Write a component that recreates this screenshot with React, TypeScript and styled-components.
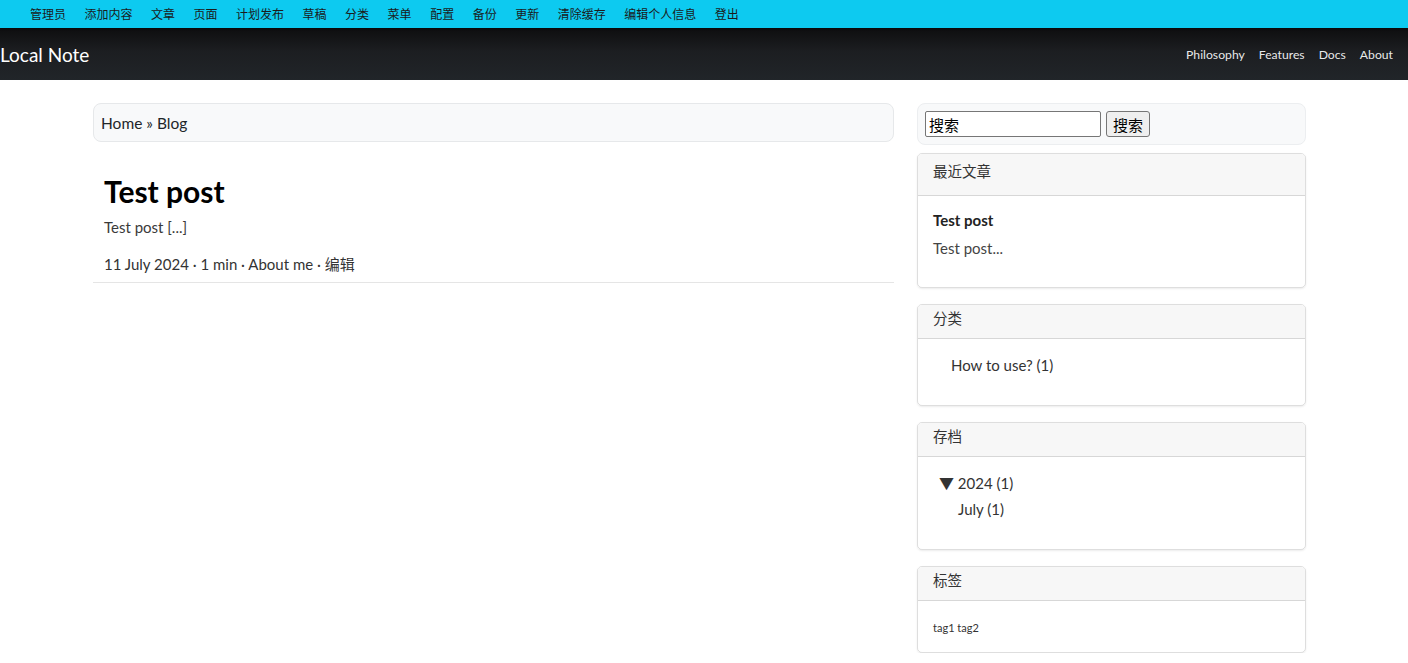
import React from 'react';
import styled, { createGlobalStyle } from 'styled-components';

const GlobalStyle = createGlobalStyle`
  html, body {
    margin: 0;
    padding: 0;
    background: #ffffff;
    font-family: Lato, 'Noto Sans CJK SC', sans-serif;
    color: #212529;
  }
  * {
    box-sizing: border-box;
  }
`;

const AdminBar = styled.div`
  height: 28px;
  background: #0dcaf0;
  display: flex;
  align-items: center;
  padding-left: 21px;
  box-shadow: 0 1px 2px rgba(0, 0, 0, 0.45);
  position: relative;
  z-index: 1;
`;

const AdminLink = styled.a`
  font-size: 12px;
  line-height: 16px;
  color: #1b1b1b;
  padding: 0 9px;
  margin-right: 0.5px;
  text-decoration: none;
  font-family: 'Noto Sans CJK SC', sans-serif;
`;

const Navbar = styled.nav`
  height: 52px;
  background: linear-gradient(180deg, #0e0e0f 0%, #1c1e21 45%, #212529 100%);
  display: flex;
  align-items: center;
  justify-content: space-between;
  padding-right: 15px;
`;

const Brand = styled.a`
  font-size: 19px;
  color: #ffffff;
  text-decoration: none;
`;

const NavLinks = styled.div`
  display: flex;
  gap: 14px;
`;

const NavLink = styled.a`
  font-size: 12.2px;
  color: rgba(255, 255, 255, 0.92);
  text-decoration: none;
`;

const Main = styled.main`
  display: flex;
  align-items: flex-start;
  gap: 23px;
  padding: 23px 0 0 93px;
`;

const Content = styled.div`
  width: 801px;
`;

const Breadcrumb = styled.div`
  height: 39px;
  display: flex;
  align-items: center;
  padding: 0 7px;
  background: #f8f9fa;
  border: 1px solid #e6e8ea;
  border-radius: 8px;
  font-size: 15.5px;
`;

const Post = styled.article`
  padding: 0 11px 7px;
  border-bottom: 1px solid #e5e5e5;
`;

const PostTitle = styled.h2`
  margin: 31px 0 0;
  font-size: 30px;
  line-height: 36px;
  font-weight: 700;
  color: #000;
`;

const Excerpt = styled.p`
  margin: 7px 0 0;
  font-size: 15px;
  line-height: 22px;
  color: #3a3a3a;
`;

const Meta = styled.div`
  margin-top: 15px;
  font-size: 15px;
  line-height: 22px;
  color: #333;
`;

const Sidebar = styled.aside`
  width: 389px;
  display: flex;
  flex-direction: column;
  gap: 8px;
`;

const SearchBox = styled.form`
  height: 42px;
  display: flex;
  align-items: center;
  gap: 5px;
  padding: 0 7px;
  background: #f8f9fa;
  border: 1px solid #eceef0;
  border-radius: 8px;
`;

const SearchInput = styled.input`
  width: 176px;
  height: 26px;
  border: 1px solid #767676;
  border-radius: 2px;
  padding: 0 3px;
  font-size: 15px;
  font-family: 'Noto Sans CJK SC', sans-serif;
  color: #000;
  background: #fff;
`;

const SearchButton = styled.button`
  width: 44px;
  height: 26px;
  border: 1px solid #767676;
  border-radius: 3px;
  background: #efefef;
  font-size: 15px;
  font-family: 'Noto Sans CJK SC', sans-serif;
  color: #000;
  padding: 0;
`;

const Widgets = styled.div`
  display: flex;
  flex-direction: column;
  gap: 16px;
`;

const Card = styled.section`
  border: 1px solid rgba(0, 0, 0, 0.13);
  border-radius: 5px;
  box-shadow: 0 1px 2px rgba(0, 0, 0, 0.08);
  overflow: hidden;
`;

const CardHeader = styled.div<{ $tall?: boolean }>`
  height: ${(p) => (p.$tall ? '42px' : '34px')};
  padding: ${(p) => (p.$tall ? '6px' : '2px')} 15px 0;
  background: #f7f7f7;
  border-bottom: 1px solid rgba(0, 0, 0, 0.13);
  font-size: 14.5px;
  line-height: 22px;
  color: #333;
  font-family: 'Noto Sans CJK SC', sans-serif;
`;

const CardBody = styled.div<{ $top: number; $bottom: number }>`
  padding: ${(p) => p.$top}px 15px ${(p) => p.$bottom}px;
  font-size: 15px;
  line-height: 22px;
  color: #333;
`;

const RecentTitle = styled.div`
  font-weight: 700;
  color: #222;
`;

const RecentText = styled.div`
  margin-top: 6px;
  color: #444;
`;

const ListItem = styled.div<{ $indent: number }>`
  padding-left: ${(p) => p.$indent}px;
  & + & {
    margin-top: 4px;
  }
`;

const Tags = styled.div`
  font-size: 11px;
  line-height: 16px;
  color: #333;
`;

const adminItems = [
  '管理员',
  '添加内容',
  '文章',
  '页面',
  '计划发布',
  '草稿',
  '分类',
  '菜单',
  '配置',
  '备份',
  '更新',
  '清除缓存',
  '编辑个人信息',
  '登出',
];

const navItems = ['Philosophy', 'Features', 'Docs', 'About'];

const App = () => {
  return (
    <>
      <GlobalStyle />
      <AdminBar>
        {adminItems.map((item) => (
          <AdminLink key={item}>{item}</AdminLink>
        ))}
      </AdminBar>
      <Navbar>
        <Brand>Local Note</Brand>
        <NavLinks>
          {navItems.map((item) => (
            <NavLink key={item}>{item}</NavLink>
          ))}
        </NavLinks>
      </Navbar>
      <Main>
        <Content>
          <Breadcrumb>Home » Blog</Breadcrumb>
          <Post>
            <PostTitle>Test post</PostTitle>
            <Excerpt>Test post [...]</Excerpt>
            <Meta>11 July 2024 · 1 min · About me · 编辑</Meta>
          </Post>
        </Content>
        <Sidebar>
          <SearchBox onSubmit={(e) => e.preventDefault()}>
            <SearchInput defaultValue="搜索" />
            <SearchButton type="submit">搜索</SearchButton>
          </SearchBox>
          <Widgets>
            <Card>
              <CardHeader $tall>最近文章</CardHeader>
              <CardBody $top={13} $bottom={28}>
                <RecentTitle>Test post</RecentTitle>
                <RecentText>Test post...</RecentText>
              </CardBody>
            </Card>
            <Card>
              <CardHeader>分类</CardHeader>
              <CardBody $top={15} $bottom={29}>
                <ListItem $indent={18}>How to use? (1)</ListItem>
              </CardBody>
            </Card>
            <Card>
              <CardHeader>存档</CardHeader>
              <CardBody $top={15} $bottom={29}>
                <ListItem $indent={6}>▼ 2024 (1)</ListItem>
                <ListItem $indent={25}>July (1)</ListItem>
              </CardBody>
            </Card>
            <Card>
              <CardHeader>标签</CardHeader>
              <CardBody $top={19} $bottom={16}>
                <Tags>tag1 tag2</Tags>
              </CardBody>
            </Card>
          </Widgets>
        </Sidebar>
      </Main>
    </>
  );
};

export default App;
